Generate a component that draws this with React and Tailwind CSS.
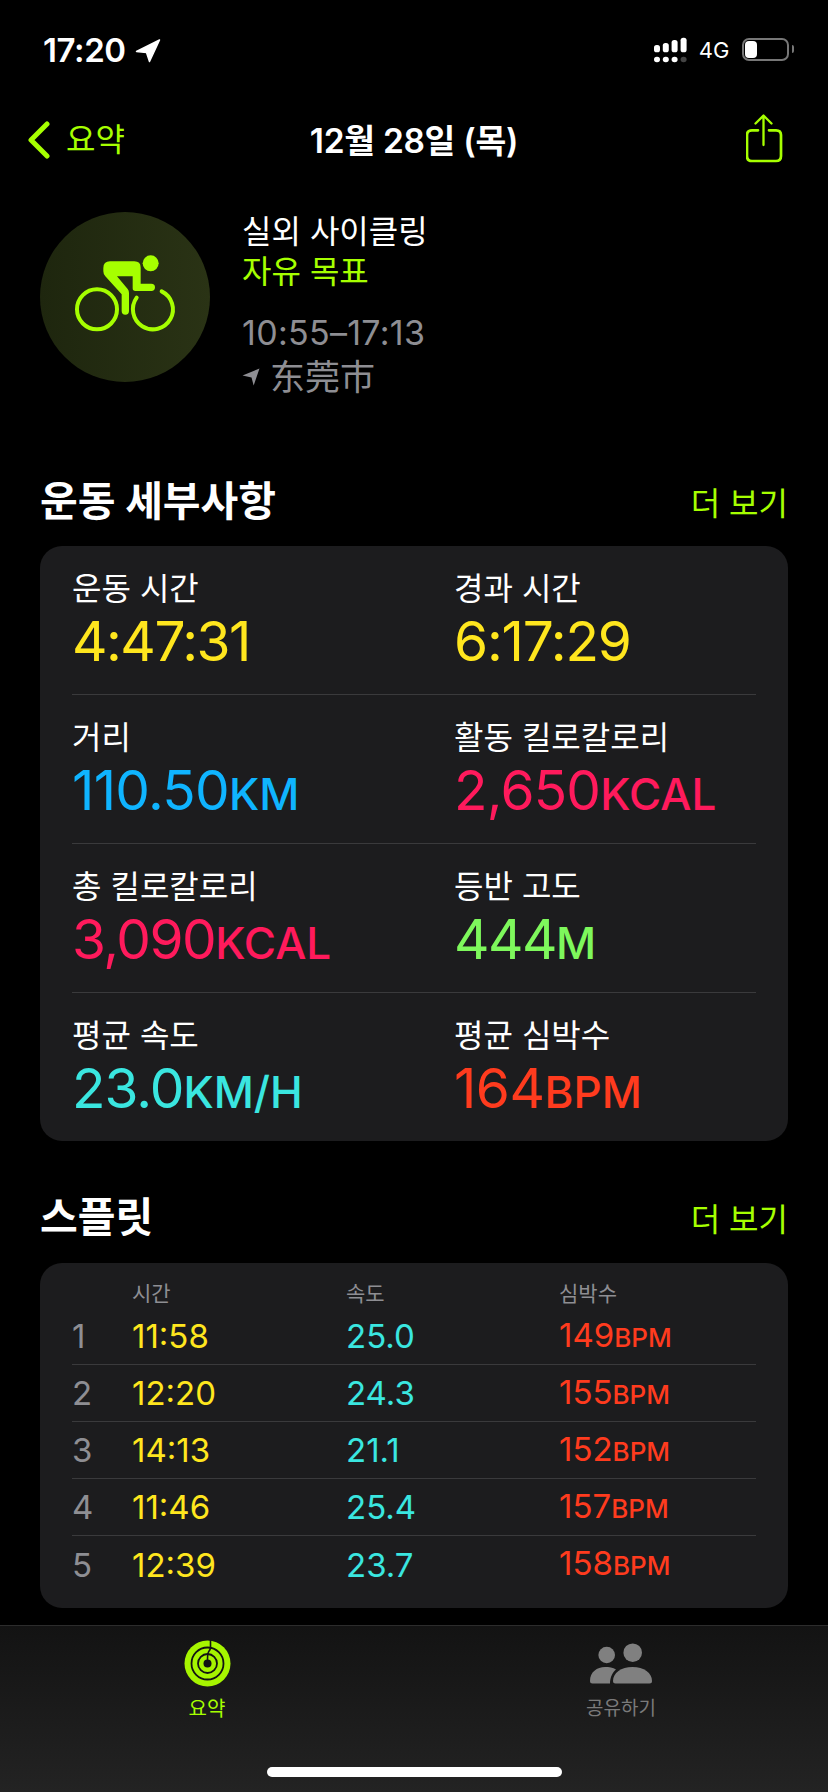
const metrics = [
  [{ l: "운동 시간", v: "4:47:31", c: "text-[#ffe61e]", t: "tracking-[-1.5px]" }, { l: "경과 시간", v: "6:17:29", c: "text-[#ffe61e]", t: "tracking-[-1.2px]" }],
  [{ l: "거리", v: "110.50", u: "KM", c: "text-[#0fb4ff]", t: "tracking-[-0.7px]" }, { l: "활동 킬로칼로리", v: "2,650", u: "KCAL", c: "text-[#ff1a5c]", t: "tracking-[-0.8px]" }],
  [{ l: "총 킬로칼로리", v: "3,090", u: "KCAL", c: "text-[#ff1a5c]", t: "tracking-[-1.5px]" }, { l: "등반 고도", v: "444", u: "M", c: "text-[#7ef85c]", t: "tracking-[-1.5px]" }],
  [{ l: "평균 속도", v: "23.0", u: "KM/H", c: "text-[#3ae6e0]", t: "tracking-[-1px]" }, { l: "평균 심박수", v: "164", u: "BPM", c: "text-[#ff3b1e]", t: "tracking-[-0.5px]" }],
];
const splits = [
  ["1", "11:58", "25.0", "149"],
  ["2", "12:20", "24.3", "155"],
  ["3", "14:13", "21.1", "152"],
  ["4", "11:46", "25.4", "157"],
  ["5", "12:39", "23.7", "158"],
];

function SectionHead({ title }) {
  return (
    <div className="flex h-[52px] items-center justify-between px-10">
      <span className="text-[41px] font-bold leading-[52px] text-white">{title}</span>
      <span className="pt-[6px] text-[32px] leading-[46px] text-[#a6ff00]">더 보기</span>
    </div>
  );
}

function Bike() {
  return (
    <svg width="170" height="170" viewBox="60 65 510 510" fill="none">
      <circle cx="231" cy="357" r="60" stroke="#a6ff00" strokeWidth="12" />
      <path d="M350 322 A60 60 0 1 0 425 303" stroke="#a6ff00" strokeWidth="12" strokeLinecap="round" />
      <circle cx="392" cy="219" r="24" fill="#a6ff00" />
      <path d="M270 213 H343 Q362 213 362 232 V280 H394 A11 11 0 0 1 394 302 H346 Q338 302 338 294 V258 H291 L323 296 Q327 301 327 308 V362 A11 11 0 0 1 305 362 V312 L256 258 Q250 252 250 243 V233 Q250 213 270 213 Z" fill="#a6ff00" />
    </svg>
  );
}

export default function App() {
  return (
    <div className="flex h-[1792px] w-[828px] flex-col overflow-hidden bg-black font-['Inter','Noto_Sans_CJK_KR',sans-serif] text-white">
      {/* status bar */}
      <div className="flex h-[112px] shrink-0 items-start justify-between pl-[43px] pr-[34px] pt-[32px]">
        <div className="flex h-[36px] items-center gap-[9px]">
          <span className="text-[33px] font-semibold leading-[36px] tracking-[-0.4px]">17:20</span>
          <svg width="26" height="26" viewBox="0 0 26 26"><path d="M24.5 3 L1.5 14.5 L11.5 15.5 L14.5 24.5 Z" fill="#fff" stroke="#fff" strokeLinejoin="round" strokeWidth="1.5" /></svg>
        </div>
        <div className="flex h-[36px] items-center">
          <svg width="33" height="26" viewBox="0 0 33 26">
            <rect x="0" y="8" width="6" height="7.3" rx="2.6" fill="#fff" /><rect x="8.8" y="6" width="6" height="9.3" rx="2.6" fill="#fff" /><rect x="17.6" y="3" width="6" height="12.3" rx="2.6" fill="#fff" /><rect x="26.6" y="0.7" width="6" height="14.6" rx="2.6" fill="#fff" />
            <rect x="0" y="19.7" width="6" height="5.6" rx="2.8" fill="#fff" /><rect x="8.8" y="19.7" width="6" height="5.6" rx="2.8" fill="#fff" /><rect x="17.6" y="19.7" width="6" height="5.6" rx="2.8" fill="#fff" /><rect x="26.6" y="19.7" width="6" height="5.6" rx="2.8" fill="#444" />
          </svg>
          <span className="ml-[12px] text-[22px] leading-[36px]">4G</span>
          <div className="mb-[2px] ml-[12px] flex h-[23px] w-[47px] items-center rounded-[7px] border-2 border-[#777] p-[1px]">
            <div className="h-[17px] w-[12px] rounded-[4px] bg-white" />
          </div>
          <div className="mb-[2px] ml-[3px] h-[8px] w-[2.5px] rounded-r-full bg-[#777]" />
        </div>
      </div>

      {/* nav */}
      <div className="grid h-[56px] shrink-0 grid-cols-[1fr_auto_1fr] items-center px-[27px]">
        <div className="flex items-center gap-[16px]">
          <svg width="23" height="38" viewBox="0 0 23 38" fill="none"><path d="M20 3 L4 19 L20 35" stroke="#a6ff00" strokeWidth="5" strokeLinecap="round" strokeLinejoin="round" /></svg>
          <span className="text-[32px] leading-[40px] text-[#a6ff00]">요약</span>
        </div>
        <span className="pt-[1px] text-[33.5px] font-semibold leading-[40px] tracking-[-0.3px]">12월 28일 (목)</span>
        <svg className="mr-[17px] justify-self-end" width="38" height="52" viewBox="0 0 38 52" fill="none" stroke="#a6ff00" strokeLinecap="round" strokeLinejoin="round">
          <path d="M12 16.3 H6 Q1 16.3 1 21 V42 Q1 47 6 47 H30 Q35 47 35 42 V21 Q35 16.3 30 16.3 H23" strokeWidth="2.7" />
          <path d="M17.5 31 V2 M9.5 9.5 L17.5 1.5 L25.5 9.5" strokeWidth="2.3" />
        </svg>
      </div>

      {/* summary */}
      <div className="mt-[44px] flex h-[185px] shrink-0 px-10">
        <div className="flex h-[170px] w-[170px] shrink-0 items-center justify-center rounded-full bg-gradient-to-r from-[#1e260e] to-[#2a3315]">
          <Bike />
        </div>
        <div className="ml-[32px] flex flex-col">
          <span className="text-[32px] leading-[40px]">실외 사이클링</span>
          <span className="text-[32px] leading-[40px] text-[#a6ff00]">자유 목표</span>
          <span className="mt-[21px] text-[34px] leading-[40px] tracking-[0.3px] text-[#8e8e93]">10:55–17:13</span>
          <div className="mt-[4px] flex h-[40px] items-center gap-[10px] text-[#8e8e93]">
            <svg width="18" height="18" viewBox="0 0 17 17"><path d="M16.5 0.5 L0.5 7 L9 9 L11 16.5 Z" fill="#8e8e93" /></svg>
            <span className="text-[35px] leading-[40px]">东莞市</span>
          </div>
        </div>
      </div>

      {/* details */}
      <div className="mt-[78px] shrink-0"><SectionHead title="운동 세부사항" /></div>
      <div className="mx-10 mt-[19px] h-[595px] shrink-0 rounded-[22px] bg-[#1c1c1e] px-8">
        {metrics.map((row, i) => (
          <div key={i} className={`grid h-[149px] grid-cols-[382px_1fr] pt-[23px] ${i < 3 ? "border-b border-[#3a3a3c]" : ""}`}>
            {row.map((m) => (
              <div key={m.l} className="flex flex-col">
                <span className="text-[32px] leading-[40px] text-white">{m.l}</span>
                <span className={`leading-[64px] ${m.c}`}>
                  <span className={`text-[55px] ${m.t}`}>{m.v}</span>
                  {m.u && <span className="text-[44px] font-medium">{m.u}</span>}
                </span>
              </div>
            ))}
          </div>
        ))}
      </div>

      {/* splits */}
      <div className="mt-[50px] shrink-0"><SectionHead title="스플릿" /></div>
      <div className="mx-10 mt-[20px] h-[345px] shrink-0 rounded-[22px] bg-[#1c1c1e] px-8 pt-[17px]">
        <div className="grid h-[28px] grid-cols-[60px_214px_213px_1fr] items-center text-[21px] leading-[28px] text-[#8e8e93]">
          <span />
          <span>시간</span>
          <span>속도</span>
          <span>심박수</span>
        </div>
        {splits.map((s, i) => (
          <div key={s[0]} className={`grid h-[57px] grid-cols-[60px_214px_213px_1fr] items-center text-[33px] leading-[40px] ${i < 4 ? "border-b border-[#3a3a3c]" : ""}`}>
            <span className="text-[#8e8e93]">{s[0]}</span>
            <span className="text-[#ffe61e]">{s[1]}</span>
            <span className="text-[#3ae6e0]">{s[2]}</span>
            <span className="text-[#ff3b1e]">{s[3]}<span className="text-[26px] font-medium">BPM</span></span>
          </div>
        ))}
      </div>

      {/* tab bar */}
      <div className="mt-[17px] flex flex-1 flex-col border-t border-[#2c2c2c] bg-gradient-to-b from-[#131313] to-[#232323]">
        <div className="grid h-[117px] grid-cols-2 pt-[14px]">
          <div className="flex flex-col items-center">
            <svg width="47" height="47" viewBox="0 0 47 47" fill="none">
              <circle cx="23.5" cy="23.5" r="23" fill="#a6f500" />
              <circle cx="23.5" cy="23.5" r="16" stroke="#131313" strokeWidth="1.8" />
              <circle cx="23.5" cy="23.5" r="9.5" stroke="#131313" strokeWidth="1.8" />
              <circle cx="23.5" cy="23.5" r="4" fill="#131313" />
              <path d="M26.5 0 V7 Q26.5 10 24.5 12 Q23.5 14 23.5 20" stroke="#131313" strokeWidth="1.6" />
            </svg>
            <span className="mt-[6px] text-[20px] leading-[32px] text-[#a6ff00]">요약</span>
          </div>
          <div className="flex flex-col items-center">
            <svg width="62" height="47" viewBox="0 0 62 47" fill="#808080">
              <circle cx="16.7" cy="15" r="8.3" />
              <circle cx="42.7" cy="12.7" r="9.3" />
              <path d="M0 41 C0 32 7 27 15 27 C19 27 23 27.5 26 29.5 C23 32 20 37 20 43.5 H2.5 Q0 43.5 0 41 Z" />
              <path d="M23 41 C23 33 31 27 42.5 27 C54 27 62 33 62 41 Q62 43.5 59.5 43.5 H25.5 Q23 43.5 23 41 Z" />
            </svg>
            <span className="mt-[6px] text-[19px] leading-[32px] text-[#7a7a7a]">공유하기</span>
          </div>
        </div>
        <div className="mt-[24px] h-[10px] w-[295px] self-center rounded-full bg-white" />
      </div>
    </div>
  );
}
